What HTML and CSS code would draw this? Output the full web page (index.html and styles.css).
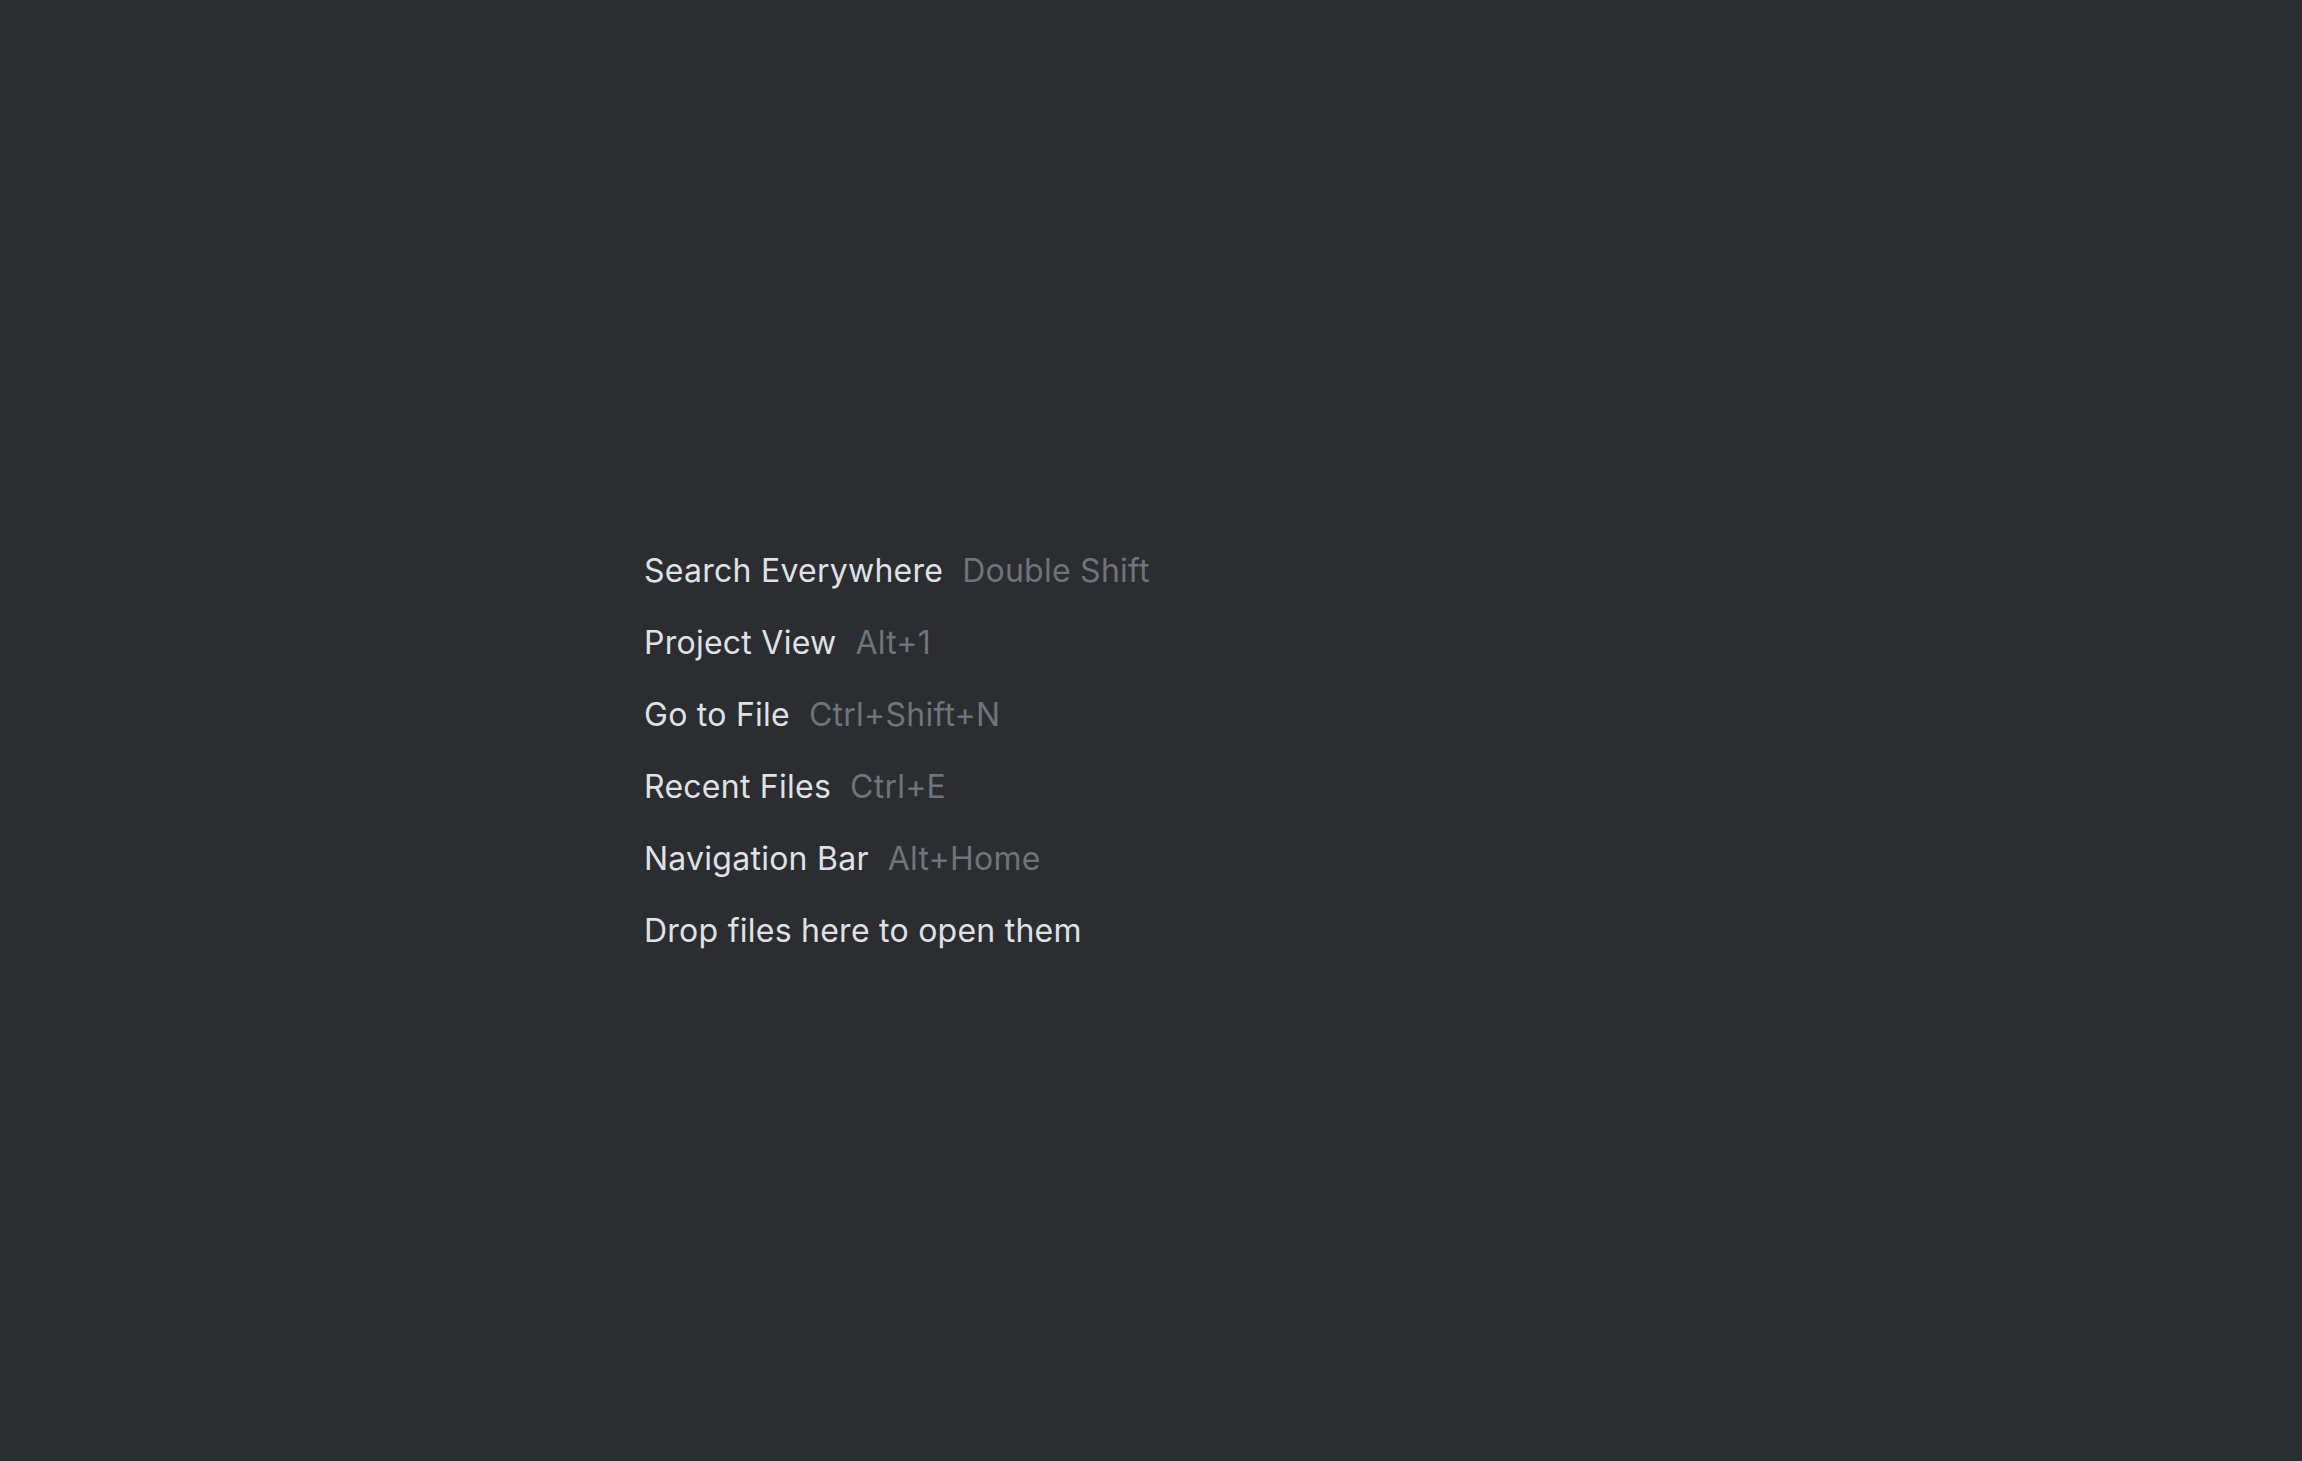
FILE: index.html
```html
<!DOCTYPE html>
<html lang="en">
<head>
<meta charset="utf-8">
<title>Empty Frame</title>
<link rel="stylesheet" href="styles.css">
</head>
<body>
<main class="frame">
  <ul class="hints">
    <li class="hint"><span class="label">Search Everywhere</span><span class="key">Double Shift</span></li>
    <li class="hint"><span class="label">Project View</span><span class="key">Alt+1</span></li>
    <li class="hint"><span class="label">Go to File</span><span class="key">Ctrl+Shift+N</span></li>
    <li class="hint"><span class="label">Recent Files</span><span class="key">Ctrl+E</span></li>
    <li class="hint"><span class="label">Navigation Bar</span><span class="key">Alt+Home</span></li>
    <li class="hint"><span class="label">Drop files here to open them</span></li>
  </ul>
</main>
</body>
</html>
```

FILE: styles.css
```css
html, body {
  margin: 0;
  padding: 0;
  height: 100%;
  background: #2b2d30;
}
body {
  font-family: Inter, "Noto Sans", sans-serif;
  overflow: hidden;
}
.frame {
  box-sizing: border-box;
  height: 100%;
  padding: 535px 0 0 644px;
}
.hints {
  list-style: none;
  margin: 0;
  padding: 0;
  display: flex;
  flex-direction: column;
}
.hint {
  display: flex;
  gap: 19px;
  font-size: 32px;
  line-height: 72px;
  letter-spacing: 0.25px;
  white-space: nowrap;
}
.label {
  color: #dfe1e5;
}
.key {
  color: #6f737a;
}
```
